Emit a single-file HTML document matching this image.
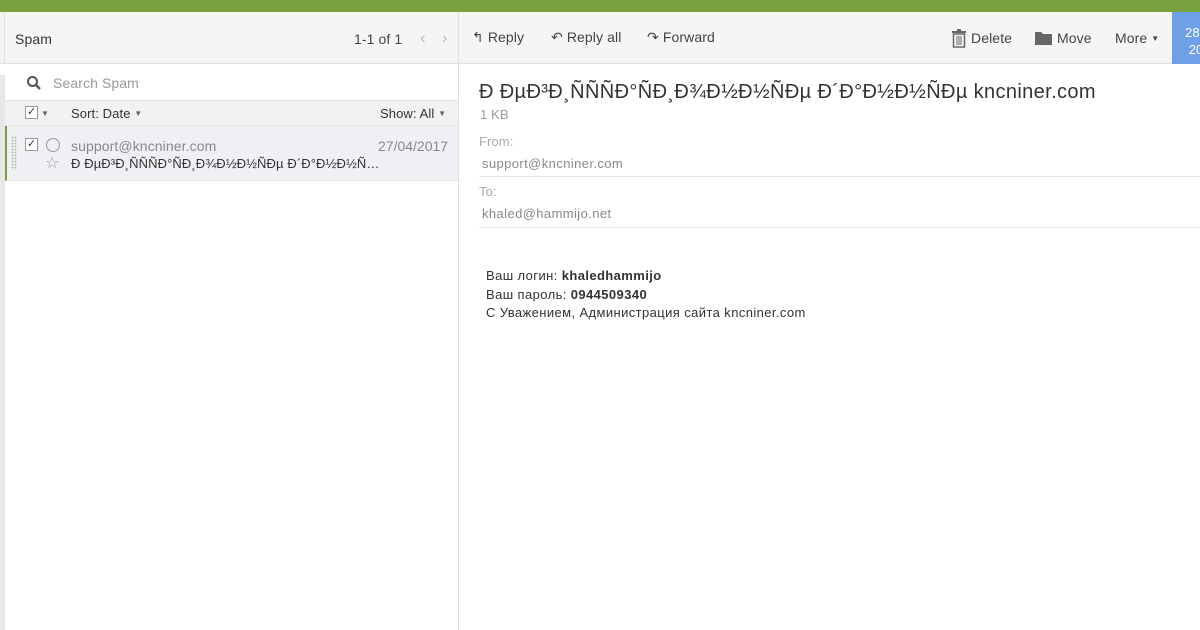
<!DOCTYPE html>
<html><head><meta charset="utf-8"><style>
*{margin:0;padding:0;box-sizing:border-box}
body{width:1200px;height:630px;overflow:hidden;background:#fff;font-family:"Liberation Sans","DejaVu Sans",sans-serif;color:#333;position:relative;letter-spacing:0.1px}
.a{position:absolute;white-space:nowrap}
</style></head><body>
<div class="a" style="left:0;top:0;width:1200px;height:12px;background:#78a13e"></div>
<div class="a" style="left:0;top:12px;width:1200px;height:52px;background:#f5f5f5;border-bottom:1px solid #e2e2e2"></div>
<div class="a" style="left:458px;top:12px;width:1px;height:618px;background:#e0e0e0"></div>
<div class="a" style="left:0;top:75px;width:5px;height:555px;background:#e8e8e8"></div>
<div class="a" style="left:4px;top:12px;width:1px;height:52px;background:#e0e0e0"></div>
<div class="a" style="left:15px;top:31px;font-size:14px">Spam</div>
<div class="a" style="left:354px;top:31px;font-size:14px;color:#444">1-1 of 1</div>
<div class="a" style="left:420px;top:28px;font-size:17px;color:#bbb">‹</div>
<div class="a" style="left:442px;top:28px;font-size:17px;color:#bbb">›</div>
<svg class="a" style="left:26px;top:75px" width="16" height="16"><circle cx="6.5" cy="6.5" r="4.5" fill="none" stroke="#555" stroke-width="2"/><line x1="10" y1="10" x2="14" y2="14" stroke="#555" stroke-width="2.5"/></svg>
<div class="a" style="left:53px;top:75px;font-size:14px;color:#999">Search Spam</div>
<div class="a" style="left:5px;top:100px;width:453px;height:26px;background:#f2f2f2;border-top:1px solid #e4e4e4;border-bottom:1px solid #e4e4e4"></div>
<div class="a" style="left:25px;top:106px;width:13px;height:13px;border:1px solid #999;background:#fff;font-size:11px;line-height:11px;text-align:center">✓</div>
<div class="a" style="left:41px;top:109px;font-size:8px;color:#666">▼</div>
<div class="a" style="left:71px;top:106px;font-size:13px">Sort: Date <span style="font-size:8px;color:#666;vertical-align:2px">▼</span></div>
<div class="a" style="left:380px;top:106px;font-size:13px">Show: All <span style="font-size:8px;color:#666;vertical-align:2px">▼</span></div>
<div class="a" style="left:5px;top:126px;width:453px;height:55px;background:#eef0f4;border-left:2px solid #78a13e;border-bottom:1px solid #e4e4e4"></div>
<div class="a" style="left:11px;top:136px;width:6px;height:34px;background-image:radial-gradient(#bbb 1px,transparent 1px);background-size:3px 3px"></div>
<div class="a" style="left:25px;top:138px;width:13px;height:13px;border:1px solid #999;background:#fff;font-size:11px;line-height:11px;text-align:center">✓</div>
<div class="a" style="left:46px;top:138px;width:14px;height:14px;border:1px solid #999;border-radius:50%"></div>
<div class="a" style="left:45px;top:153px;font-size:16px;color:#999">☆</div>
<div class="a" style="left:71px;top:138px;font-size:14px;color:#888">support@kncniner.com</div>
<div class="a" style="left:378px;top:138px;font-size:14px;color:#888;letter-spacing:0">27/04/2017</div>
<div class="a" style="left:71px;top:156px;font-size:13px;color:#333;letter-spacing:0.1px">Ð ÐµÐ³Ð¸ÑÑÑÐ°ÑÐ¸Ð¾Ð½Ð½ÑÐµ Ð´Ð°Ð½Ð½Ñ…</div>
<div class="a" style="left:472px;top:29px;font-size:14px;color:#444">↰ Reply</div>
<div class="a" style="left:551px;top:29px;font-size:14px;color:#444">↶ Reply all</div>
<div class="a" style="left:647px;top:29px;font-size:14px;color:#444">↷ Forward</div>
<svg class="a" style="left:951px;top:29px" width="16" height="19"><rect x="1" y="2" width="14" height="2" fill="#666"/><rect x="6" y="0" width="4" height="2" fill="#666"/><rect x="2.5" y="5" width="11" height="13" fill="none" stroke="#666" stroke-width="1.5"/><path d="M6 7v9M8 7v9M10 7v9" stroke="#666"/></svg>
<div class="a" style="left:971px;top:30px;font-size:14px;color:#444">Delete</div>
<svg class="a" style="left:1035px;top:31px" width="17" height="14"><path d="M0 1h6l2 2h9v11H0z" fill="#666"/></svg>
<div class="a" style="left:1057px;top:30px;font-size:14px;color:#444">Move</div>
<div class="a" style="left:1115px;top:30px;font-size:14px;color:#444">More <span style="font-size:8px;vertical-align:2px">▼</span></div>
<div class="a" style="left:1172px;top:12px;width:28px;height:52px;background:#6ea0e8;color:#fff;font-size:13px;padding:12px 0 0 13px;line-height:17px">28<br>&nbsp;20</div>
<div class="a" style="left:479px;top:81px;font-size:20px;color:#333;letter-spacing:0.37px">Ð ÐµÐ³Ð¸ÑÑÑÐ°ÑÐ¸Ð¾Ð½Ð½ÑÐµ Ð´Ð°Ð½Ð½ÑÐµ kncniner.com</div>
<div class="a" style="left:480px;top:107px;font-size:13px;color:#999">1 KB</div>
<div class="a" style="left:479px;top:134px;font-size:13px;color:#aaa">From:</div>
<div class="a" style="left:482px;top:156px;font-size:13px;color:#888;letter-spacing:0.4px">support@kncniner.com</div>
<div class="a" style="left:479px;top:176px;width:721px;height:1px;background:#e4e4e4"></div>
<div class="a" style="left:479px;top:184px;font-size:13px;color:#aaa">To:</div>
<div class="a" style="left:482px;top:206px;font-size:13px;color:#888;letter-spacing:0.4px">khaled@hammijo.net</div>
<div class="a" style="left:479px;top:227px;width:721px;height:1px;background:#e4e4e4"></div>
<div class="a" style="left:486px;top:267px;font-size:13px;line-height:18.5px;color:#333;letter-spacing:0.4px">Ваш логин: <b>khaledhammijo</b><br>Ваш пароль: <b>0944509340</b><br>С Уважением, Администрация сайта kncniner.com</div>
</body></html>
